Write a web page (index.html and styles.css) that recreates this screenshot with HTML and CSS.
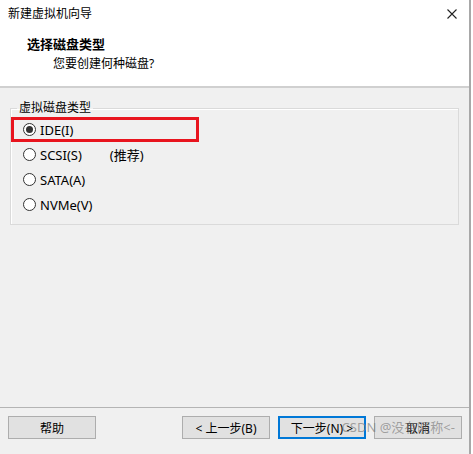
FILE: index.html
```html
<!DOCTYPE html>
<html>
<head>
	<meta charset="utf-8">
	<title>新建虚拟机向导</title>
	<link rel="stylesheet" href="styles.css">
</head>
<body>
<div class="wizard">
	<div class="titlebar">
		<span class="title">新建虚拟机向导</span>
		<svg class="close" width="10" height="10" viewBox="0 0 10 10">
			<path d="M0.5 0.5 L9.5 9.5 M9.5 0.5 L0.5 9.5" stroke="#222" stroke-width="1.1" fill="none"/>
		</svg>
	</div>

	<div class="header">
		<div class="heading">选择磁盘类型</div>
		<div class="sub">您要创建何种磁盘?</div>
	</div>

	<div class="content">
		<fieldset class="group">
			<legend>虚拟磁盘类型</legend>
			<div class="row marked"><span class="radio checked"></span><span class="label">IDE(I)</span></div>
			<div class="row"><span class="radio"></span><span class="label">SCSI(S)</span><span class="hint">(推荐)</span></div>
			<div class="row"><span class="radio"></span><span class="label">SATA(A)</span></div>
			<div class="row"><span class="radio"></span><span class="label">NVMe(V)</span></div>
		</fieldset>
	</div>

	<div class="footer">
		<button class="btn">帮助</button>
		<div class="spacer"></div>
		<button class="btn">&lt; 上一步(B)</button>
		<button class="btn default">下一步(N) &gt;</button>
		<button class="btn">取消</button>
		<span class="watermark">CSDN @没有昵称&lt;-</span>
	</div>
</div>
</body>
</html>
```

FILE: styles.css
```css
html,body{
	margin:0;
	padding:0;
	background:#ffffff;
}
body{
	font-family:"Segoe UI","Noto Sans","Noto Sans CJK SC",sans-serif;
	font-size:12px;
	color:#000000;
}
.wizard{
	width:469px;
	height:454px;
	border-right:2px solid #a8a8a8;
	display:flex;
	flex-direction:column;
	background:#f0f0f0;
}
.titlebar{
	height:28px;
	display:flex;
	align-items:center;
	justify-content:space-between;
	padding:0 12px 0 8px;
	background:#ffffff;
}
.title{
	line-height:28px;
}
.close{
	display:block;
}
.header{
	height:58px;
	padding-left:27px;
	background:#ffffff;
	border-bottom:2px solid #d0d0d0;
}
.heading{
	margin-top:7px;
	line-height:18px;
	font-size:13px;
	font-weight:bold;
}
.sub{
	margin-top:2px;
	padding-left:26px;
	line-height:18px;
}
.content{
	flex:1;
	padding:12px 10px 0 10px;
}
.group{
	margin:0;
	padding:1px 0 7px 0;
	border:1px solid #dadada;
	box-shadow:inset 1px 1px 0 #ffffff;
}
.group legend{
	margin-left:6px;
	padding:0 2px;
	line-height:16px;
}
.row{
	height:25px;
	display:flex;
	align-items:center;
	padding-left:12px;
	box-sizing:border-box;
}
.row.marked{
	width:188px;
	border:3px solid #e8141e;
	padding-left:9px;
}
.radio{
	width:13px;
	height:13px;
	box-sizing:border-box;
	border:1px solid #333333;
	border-radius:50%;
	background:#ffffff;
	display:flex;
	align-items:center;
	justify-content:center;
}
.radio.checked::after{
	content:"";
	width:7px;
	height:7px;
	border-radius:50%;
	background:#333333;
}
.label{
	margin-left:4px;
	line-height:16px;
	font-size:13px;
}
.hint{
	margin-left:28px;
	font-size:13px;
}
.footer{
	height:38px;
	border-top:1px solid #b4b4b4;
	display:flex;
	align-items:flex-start;
	padding:8px 7px 0 8px;
	gap:8px;
	position:relative;
}
.spacer{
	flex:1;
}
.btn{
	width:88px;
	height:23px;
	margin:0;
	padding:0;
	background:#e1e1e1;
	border:1px solid #adadad;
	font-family:"Segoe UI","Noto Sans","Noto Sans CJK SC",sans-serif;
	font-size:12px;
	color:#000000;
}
.btn.default{
	border:2px solid #0078d7;
}
.watermark{
	position:absolute;
	right:14px;
	top:10px;
	font-size:13px;
	line-height:18px;
	color:rgba(120,120,120,0.65);
	white-space:nowrap;
}
```
